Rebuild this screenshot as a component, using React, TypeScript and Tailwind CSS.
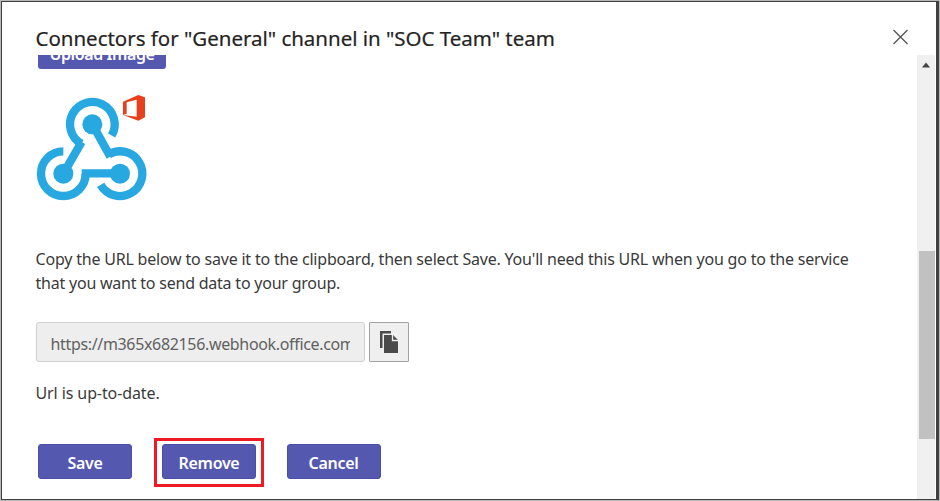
import type { ReactNode } from "react";

const FONT = "font-['Noto_Sans','Open_Sans',sans-serif]";

function ActionButton({ children }: { children: ReactNode }) {
  return (
    <button className="block h-[35px] w-[94px] rounded-[3px] border border-[#4b4ea8] bg-[#5558af] pt-[3px] text-[16px] leading-[31px] font-semibold tracking-[-0.3px] text-white">
      {children}
    </button>
  );
}

function WebhookLogo() {
  return (
    <svg className="block h-[125px] w-[130px]" viewBox="0 0 390 375" fill="none">
      <g stroke="#28a8e0" strokeWidth="25">
        <path d="M245 151.500A67 67 0 1 0 154.500 176.500" />
        <path d="M100 199A67 67 0 1 0 167 266" />
        <path d="M236.500 208A67 67 0 1 1 212 299.500" />
        <path d="M100 266L155 171M187 118L241 215M155 265H270" />
      </g>
      <g fill="#28a8e0">
        <circle cx="187" cy="118" r="30" />
        <circle cx="100" cy="266" r="30" />
        <circle cx="270" cy="266" r="30" />
      </g>
      <path fill="#e8401c" d="M279 90V50L325 30L345 37V97L325 107L279 90L320 95V44L290 52V86Z" />
    </svg>
  );
}

function CopyIcon() {
  return (
    <svg className="block h-[24px] w-[20px]" viewBox="0 0 20 24">
      <path fill="#4a4a4a" d="M1 1H12V3.500H3.500V18H1Z" />
      <path fill="#4a4a4a" d="M5 5H14L19 10V23H5Z" />
      <path d="M13.500 5V10.500H19" fill="none" stroke="#eee" strokeWidth="1.300" />
    </svg>
  );
}

export default function App() {
  return (
    <div className={`h-[501px] w-[940px] overflow-hidden border border-[#b8b8b8] bg-white ${FONT}`}>
      <div className="flex h-[499px] w-[938px] flex-col border-t border-r-[3px] border-b border-l border-[#404040]">
        <header className="flex h-[53px] shrink-0 justify-between pr-[27px] pl-[34px]">
          <h1 className="-ml-[0.5px] pt-[22px] text-[20.5px] leading-[28px] font-normal tracking-[-0.02px] whitespace-nowrap text-[#252423] [-webkit-text-stroke:0.2px_#252423]">
            Connectors for "General" channel in "SOC Team" team
          </h1>
          <svg className="mt-[27px] h-[16px] w-[16px]" viewBox="0 0 16 16">
            <path d="M.5 1L14.500 15M14.500 1L.5 15" stroke="#555" strokeWidth="1.300" />
          </svg>
        </header>
        <div className="flex min-h-0 grow">
          <main className="flex min-w-0 grow flex-col overflow-hidden pl-[34px] text-[#3a3a3a]">
            <div className="ml-[2px] flex h-[14px] w-[128px] shrink-0 items-end justify-center overflow-hidden rounded-b-[3px] bg-[#5558af]">
              <span className="h-[30px] shrink-0 text-[16px] leading-[30px] font-semibold tracking-[-0.4px] whitespace-nowrap text-white">
                Upload Image
              </span>
            </div>
            <div className="-ml-[6px] mt-[16px] shrink-0">
              <WebhookLogo />
            </div>
            <p className="mt-[37px] -ml-[0.5px] text-[16px] leading-[24px] whitespace-nowrap">
              <span className="block tracking-[-0.2px]">
                Copy the URL below to save it to the clipboard, then select Save. You'll need this URL when you go to the service
              </span>
              <span className="block tracking-[-0.22px]">that you want to send data to your group.</span>
            </p>
            <div className="mt-[27px] -ml-[0.5px] flex shrink-0 gap-[4px]">
              <div className="h-[40px] w-[329px] rounded-[3px] border border-[#d0d0d0] bg-[#eee] px-[14px] pt-[1px]">
                <div className="overflow-hidden text-[16px] leading-[40px] tracking-[-0.34px] whitespace-nowrap text-[#616161]">
                  https://m365x682156.webhook.office.com/webhookb2
                </div>
              </div>
              <button aria-label="Copy" className="flex h-[40px] w-[40px] items-center justify-center rounded-[1px] border border-[#a3a3a3] bg-[#efefef]">
                <CopyIcon />
              </button>
            </div>
            <p className="mt-[19px] -ml-[0.5px] text-[16px] leading-[24px] tracking-[-0.1px]">Url is up-to-date.</p>
            <div className="mt-[33px] flex shrink-0 items-start">
              <div className="mt-[6px] ml-[2px]">
                <ActionButton>Save</ActionButton>
              </div>
              <div className="mr-[22.5px] ml-[22px] border-[3px] border-[#ed1c24] px-[5px] pt-[3px] pb-[5px]">
                <ActionButton>Remove</ActionButton>
              </div>
              <div className="mt-[6px]">
                <ActionButton>Cancel</ActionButton>
              </div>
            </div>
          </main>
          <aside className="mr-px flex w-[18px] shrink-0 flex-col items-center bg-[#f0f0f0]">
            <svg className="mt-[7px] h-[6px] w-[8px] shrink-0" viewBox="0 0 8 6">
              <path d="M0 5.500L4 .5L8 5.500Z" fill="#444" />
            </svg>
            <div className="mt-[183px] ml-px h-[188px] w-[16px] shrink-0 bg-[#c1c1c1]" />
          </aside>
        </div>
      </div>
    </div>
  );
}
